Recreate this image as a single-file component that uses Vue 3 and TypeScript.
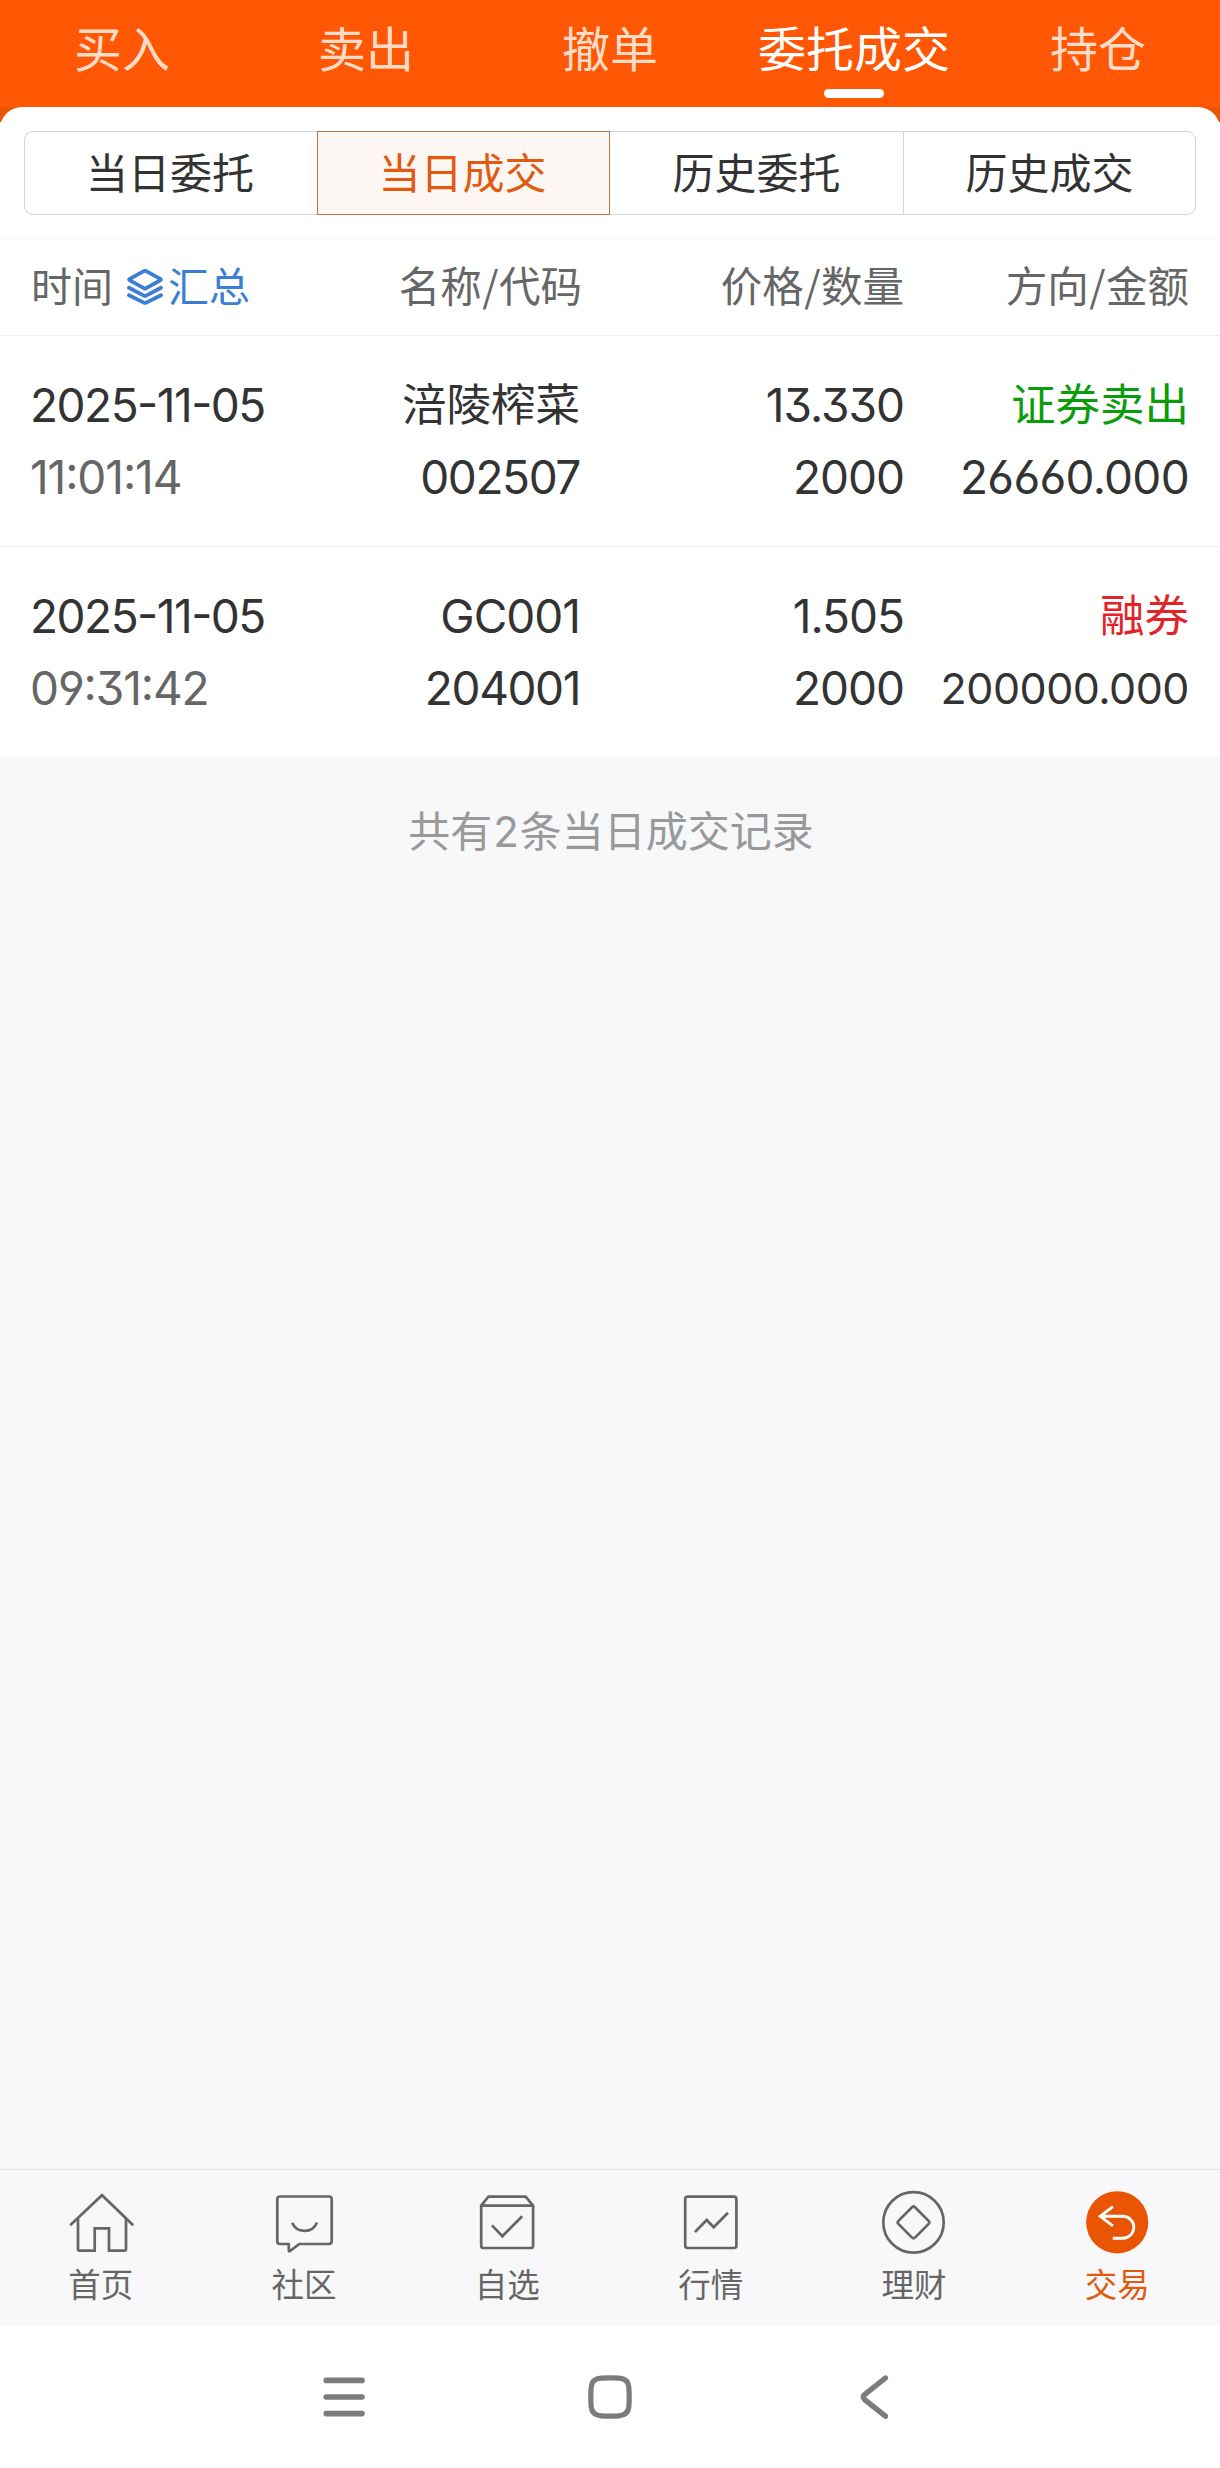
<script setup lang="ts">
interface Deal {
  date: string
  time: string
  name: string
  code: string
  price: string
  volume: string
  side: string
  tone: 'sell' | 'lend'
  amount: string
}

const topTabs: string[] = ['买入', '卖出', '撤单', '委托成交', '持仓']
const activeTop = '委托成交'
const segments: string[] = ['当日委托', '当日成交', '历史委托', '历史成交']
const activeSegment = '当日成交'

const deals: Deal[] = [
  { date: '2025-11-05', time: '11:01:14', name: '涪陵榨菜', code: '002507', price: '13.330', volume: '2000', side: '证券卖出', tone: 'sell', amount: '26660.000' },
  { date: '2025-11-05', time: '09:31:42', name: 'GC001', code: '204001', price: '1.505', volume: '2000', side: '融券', tone: 'lend', amount: '200000.000' },
]

const isHan = (s: string): boolean => /[\u4e00-\u9fff]/.test(s)

const navItems = [
  { key: 'home', label: '首页' },
  { key: 'community', label: '社区' },
  { key: 'watch', label: '自选' },
  { key: 'market', label: '行情' },
  { key: 'wealth', label: '理财' },
  { key: 'trade', label: '交易' },
]
</script>

<template>
  <div class="screen">
    <header class="top">
      <div v-for="t in topTabs" :key="t" class="top-tab" :class="{ on: t === activeTop }">
        <span>{{ t }}</span>
        <i v-if="t === activeTop" class="underline"></i>
      </div>
    </header>

    <div class="card-back">
      <section class="card">
        <div class="segments">
          <div v-for="s in segments" :key="s" class="segment" :class="{ on: s === activeSegment }">{{ s }}</div>
        </div>
      </section>
    </div>

    <div class="grid head">
      <div class="head-time">
        <span>时间</span>
        <svg class="layers" viewBox="0 0 36 36" fill="none" stroke="#3a7fd5" stroke-width="3.8" stroke-linecap="round" stroke-linejoin="round">
          <path d="M16.8 2.2Q18 1.6 19.2 2.2L33.2 9.8Q34.6 10.6 33.2 11.4L19.2 19.2Q18 19.8 16.8 19.2L2.8 11.4Q1.4 10.6 2.8 9.8Z" />
          <path d="M2 18.8L16.8 26.6Q18 27.2 19.2 26.6L34 18.8" />
          <path d="M2 26.2L16.8 33.6Q18 34.2 19.2 33.6L34 26.2" />
        </svg>
        <span class="sum">汇总</span>
      </div>
      <div>名称<i>/</i>代码</div>
      <div>价格<i>/</i>数量</div>
      <div>方向<i>/</i>金额</div>
    </div>

    <div v-for="d in deals" :key="d.code" class="grid row">
      <div class="cell"><span class="date">{{ d.date }}</span><span class="time">{{ d.time }}</span></div>
      <div class="cell name"><span :class="{ han: isHan(d.name) }">{{ d.name }}</span><span class="code">{{ d.code }}</span></div>
      <div class="cell"><span>{{ d.price }}</span><span>{{ d.volume }}</span></div>
      <div class="cell">
        <span class="han" :class="d.tone">{{ d.side }}</span>
        <span class="amount" :class="{ long: d.amount.length > 9 }">{{ d.amount }}</span>
      </div>
    </div>

    <main class="rest"><p>共有<b>2</b>条当日成交记录</p></main>

    <nav class="nav">
      <div v-for="n in navItems" :key="n.key" class="nav-item" :class="{ on: n.key === 'trade' }">
        <svg viewBox="0 0 68 64" fill="none" stroke="#666" stroke-width="2.7">
          <g v-if="n.key === 'home'">
            <path d="M2.2 35.2L34 5.2L65.2 35.2" />
            <path d="M10 29V59Q10 60.6 11.6 60.6H26.7V38.4H41V60.6H56.4Q58 60.6 58 59V29" />
          </g>
          <g v-else-if="n.key === 'community'">
            <path stroke-linejoin="round" d="M9 6.5H58Q60.7 6.5 60.7 9.2V51.3Q60.7 54 58 54H28.2L18.8 61.2Q17.8 61.6 17.8 60.4V54H9Q6.3 54 6.3 51.3V9.2Q6.3 6.5 9 6.5Z" />
            <path d="M21.2 32.8C25.5 43.6 41.5 43.6 46 32.4" />
          </g>
          <g v-else-if="n.key === 'watch'">
            <path d="M7.2 15.7V55.4Q7.2 58 9.8 58H56.5Q59.1 58 59.1 55.4V15.7" />
            <path stroke-linejoin="round" d="M7.2 15.7H59.1L51.6 6.7H14.4Z" />
            <path d="M18 35.4L28.4 46.2L48.2 26.2" />
          </g>
          <g v-else-if="n.key === 'market'">
            <rect x="7.2" y="6.7" width="51.2" height="51.3" rx="2.4" />
            <path d="M17 42L28.7 30L35.7 37.2L50 22.8" />
          </g>
          <g v-else-if="n.key === 'wealth'">
            <circle cx="32.5" cy="32.4" r="30.2" />
            <path stroke-linejoin="round" d="M31 17.2Q32.5 15.8 34 17.2L47.6 30.9Q49 32.4 47.6 33.9L34 47.6Q32.5 49 31 47.6L17.4 33.9Q16 32.4 17.4 30.9Z" />
          </g>
          <g v-else>
            <circle cx="33.2" cy="32.3" r="31.1" fill="#ea5504" stroke="none" />
            <path stroke="#fff" stroke-width="2.9" d="M28.9 16.6L16.2 26.3L28.9 35.8M16.2 26.3H38.8A11 11 0 0 1 38.8 48.3H28.7" />
          </g>
        </svg>
        <span>{{ n.label }}</span>
      </div>
    </nav>

    <footer class="system">
      <svg viewBox="0 0 44 46" fill="none" stroke="#7c7c7c" stroke-width="5.6" stroke-linecap="round"><path d="M4.2 6.4H40M4.2 23H40M4.2 39.6H40" /></svg>
      <svg viewBox="0 0 44 46" fill="none" stroke="#7c7c7c" stroke-width="5.2"><path d="M13 4.2Q22 3.4 31 4.2Q40 4.8 40.8 13Q41.6 23 40.8 33Q40 41.2 31 41.8Q22 42.6 13 41.8Q4 41.2 3.2 33Q2.4 23 3.2 13Q4 4.8 13 4.2Z" /></svg>
      <svg viewBox="0 0 44 46" fill="none" stroke="#7c7c7c" stroke-width="5.4" stroke-linecap="round"><path d="M31.4 4L10.6 20.6Q7.8 23 10.6 25.6L31.4 42.2" /></svg>
    </footer>
  </div>
</template>

<style>
body { margin: 0; background: #fff; }
</style>

<style scoped>
.screen {
  width: 1220px;
  height: 2468px;
  display: flex;
  flex-direction: column;
  background: #fff;
  color: #333;
  font-family: Inter, "Noto Sans CJK SC", sans-serif;
  overflow: hidden;
}
.top {
  flex: none;
  height: 107px;
  display: flex;
  background: #ff5704;
  font: 48px/93px "Noto Sans CJK SC", sans-serif;
  color: #ffdcc8;
}
.top-tab { flex: 1; position: relative; text-align: center; }
.top-tab.on { color: #fff; }
.underline {
  position: absolute;
  left: 92px;
  top: 89px;
  width: 60px;
  height: 9px;
  border-radius: 4.5px;
  background: #fff;
}
.card-back { flex: none; height: 131px; background: linear-gradient(#ea5504 15px, #fff 15px); }
.card {
  box-sizing: border-box;
  height: 131px;
  padding: 24px 24px 0;
  border-radius: 22px 22px 0 0;
  background: #fff;
}
.segments { display: flex; height: 84px; }
.segment {
  box-sizing: border-box;
  flex: none;
  width: 293px;
  height: 84px;
  border: 1px solid #d2d5d9;
  text-align: center;
  font: 42px/77px "Noto Sans CJK SC", sans-serif;
}
.segment:first-child { border-radius: 9px 0 0 9px; border-right: 0; padding-right: 2px; }
.segment:last-child { border-radius: 0 9px 9px 0; }
.segment:nth-child(3) { border-left: 0; border-right: 0; }
.segment.on { border-color: #b9744c; background: #fdf7f3; color: #e2590f; padding-right: 2px; }
.grid {
  flex: none;
  display: grid;
  grid-template-columns: 268px 283px 322px 285px;
  padding-left: 31px;
  text-align: right;
}
.head {
  height: 96px;
  border-top: 1px solid #f5f5f5;
  border-bottom: 1px solid #ececec;
  color: #666;
  font: 41.5px/91px "Noto Sans CJK SC", sans-serif;
}
.head i { font-style: normal; padding: 0 0.5px; }
.head-time { display: flex; align-items: center; height: 91px; font-size: 41px; }
.layers { width: 36px; height: 36px; margin: 5px 5px 0 14px; }
.sum { color: #3a7fd5; }
.row {
  height: 210px;
  font-size: 46px;
  line-height: 72px;
  letter-spacing: -1px;
  font-feature-settings: "cv03", "cv04", "cv09", "case";
}
.row + .row { border-top: 1px solid #ececec; }
.cell { display: flex; flex-direction: column; padding-top: 33px; white-space: nowrap; }
.cell:first-child { text-align: left; margin-left: -1px; }
.name { padding-right: 2px; }
.code { letter-spacing: -1.4px; }
.date { letter-spacing: -1.5px; }
.time { color: #666; letter-spacing: -1.1px; }
.amount { letter-spacing: -0.7px; }
.long { font-size: 43px; margin-left: -40px; letter-spacing: -0.5px; }
.han { font-size: 44.5px; letter-spacing: 0; }
.sell { color: #0a9c0a; }
.lend { color: #e22428; }
.rest { flex: 1; background: #f7f8fa; }
.rest p {
  margin: 42px 0 0;
  padding-left: 2px;
  text-align: center;
  color: #999;
  font: 42px/60px "Noto Sans CJK SC", sans-serif;
}
.rest b { font-weight: 400; font-family: Inter, sans-serif; padding: 0 1px; }
.nav {
  flex: none;
  box-sizing: border-box;
  height: 157px;
  display: flex;
  border-top: 1px solid #e0e2e6;
  background: #f8f8fa;
  color: #666;
}
.nav-item {
  flex: 1;
  display: flex;
  flex-direction: column;
  align-items: center;
  padding-top: 20px;
  font: 32.5px/46px "Noto Sans CJK SC", sans-serif;
}
.nav-item svg { width: 68px; height: 64px; margin-bottom: 6px; }
.nav-item span { padding-right: 2px; }
.nav-item.on { color: #e2590f; }
.system {
  flex: none;
  height: 142px;
  box-sizing: border-box;
  padding-top: 48px;
  display: flex;
  justify-content: center;
  gap: 222px;
}
.system svg { width: 44px; height: 46px; }
</style>
